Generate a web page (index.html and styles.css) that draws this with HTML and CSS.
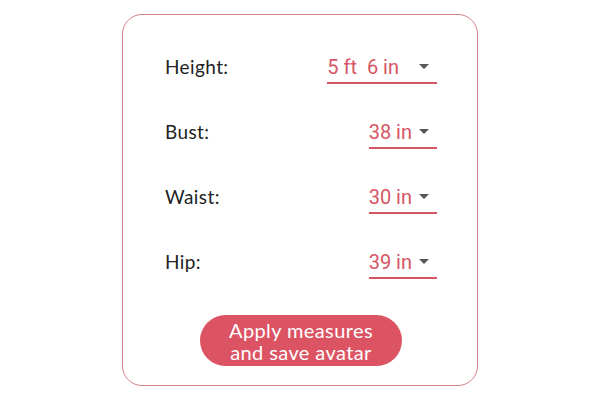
FILE: index.html
```html
<!DOCTYPE html>
<html lang="en">
<head>
  <meta charset="UTF-8">
  <title>Measurements</title>
  <meta name="viewport" content="width=device-width, initial-scale=1" />
  <link rel="stylesheet" href="styles.css">
</head>
<body>

<div class="card">
  <div class="row">
    <span class="label">Height:</span>
    <div class="select wide">
      <span class="value">5 ft&nbsp; 6 in</span>
      <span class="arrow"></span>
    </div>
  </div>
  <div class="row">
    <span class="label">Bust:</span>
    <div class="select">
      <span class="value">38 in</span>
      <span class="arrow"></span>
    </div>
  </div>
  <div class="row">
    <span class="label">Waist:</span>
    <div class="select">
      <span class="value">30 in</span>
      <span class="arrow"></span>
    </div>
  </div>
  <div class="row">
    <span class="label">Hip:</span>
    <div class="select">
      <span class="value">39 in</span>
      <span class="arrow"></span>
    </div>
  </div>

  <button class="save">Apply measures<br>and save avatar</button>
</div>

</body>
</html>
```

FILE: styles.css
```css
body {
  margin: 0;
  background: #fff;
  font-family: 'Lato', 'Noto Sans', sans-serif;
  color: #222;
}
.card {
  width: 356px;
  box-sizing: border-box;
  margin: 14px auto 0;
  border: 1px solid #d9808b;
  border-radius: 20px;
  padding: 22px 40px 19px 42px;
  display: flex;
  flex-direction: column;
}
.row {
  height: 65px;
  display: flex;
  align-items: center;
  justify-content: space-between;
}
.label {
  font-size: 19px;
  line-height: 22px;
  letter-spacing: 0.4px;
  margin-bottom: 5px;
}
.select {
  display: flex;
  align-items: center;
  padding-bottom: 4px;
  border-bottom: 2px solid #d65565;
  font-family: 'Roboto', sans-serif;
}
.value {
  font-size: 20px;
  line-height: 22px;
  color: #d65565;
}
.arrow {
  width: 0;
  height: 0;
  border-left: 5px solid transparent;
  border-right: 5px solid transparent;
  border-top: 5px solid #555;
  margin: 0 8px 0 7px;
}
.select.wide .arrow {
  margin-left: 20px;
}
.save {
  align-self: center;
  margin-top: 18px;
  width: 202px;
  height: 51px;
  padding: 0;
  border: none;
  border-radius: 26px;
  background: #dc5463;
  color: #fff;
  font-family: 'Lato', 'Noto Sans', sans-serif;
  font-size: 20px;
  line-height: 22px;
  letter-spacing: 0.4px;
  cursor: pointer;
}
.save:hover {
  background: #c94857;
}
```
